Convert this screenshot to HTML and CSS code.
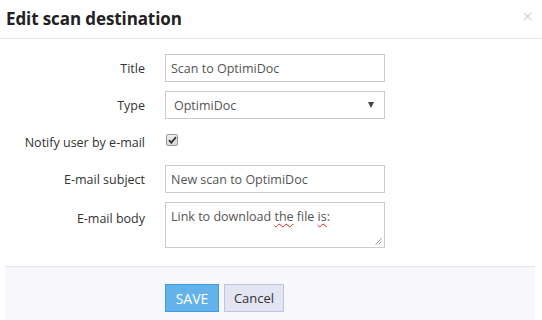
FILE: index.html
```html
<!DOCTYPE html>
<html>
<head>
<meta charset="utf-8">
<link rel="stylesheet" href="styles.css">
</head>
<body>
<div class="modal">
  <div class="modal-header">
    <h1 class="modal-title">Edit scan destination</h1>
    <span class="close">&times;</span>
  </div>
  <div class="modal-body">
    <div class="row">
      <label class="lbl">Title</label>
      <div class="field input">Scan to OptimiDoc</div>
    </div>
    <div class="row">
      <label class="lbl">Type</label>
      <div class="field select"><span>OptimiDoc</span><span class="caret"></span></div>
    </div>
    <div class="row row-check">
      <label class="lbl">Notify user by e-mail</label>
      <span class="check"><svg width="9" height="8" viewBox="0 0 9 8"><path d="M1 4.2 L3.3 6.6 L8 1.2" fill="none" stroke="#333" stroke-width="1.8"/></svg></span>
    </div>
    <div class="row">
      <label class="lbl">E-mail subject</label>
      <div class="field input">New scan to OptimiDoc</div>
    </div>
    <div class="row row-area">
      <label class="lbl">E-mail body</label>
      <div class="field area">Link to download <span class="sp">the</span> file <span class="sp">is</span>:<svg class="grip" width="7" height="7" viewBox="0 0 7 7"><path d="M6.5 0.5 L0.5 6.5 M6.5 3.5 L3.5 6.5" stroke="#888" stroke-width="0.9"/></svg></div>
    </div>
  </div>
  <div class="modal-footer">
    <button class="btn btn-save">SAVE</button>
    <button class="btn btn-cancel">Cancel</button>
  </div>
</div>
</body>
</html>
```

FILE: styles.css
```css
* { box-sizing: border-box; }
html, body { margin: 0; padding: 0; background: #fff; }
body {
  font-family: "Open Sans", "Noto Sans", sans-serif;
  font-size: 12.5px;
  color: #333;
  width: 542px;
  height: 320px;
  overflow: hidden;
}
.modal { width: 542px; }
.modal-header {
  height: 39px;
  border-bottom: 1px solid #e8e8e8;
  display: flex;
  align-items: center;
  justify-content: space-between;
  padding: 0 10px 2px 6px;
}
.modal-title {
  margin: 0;
  font-size: 17px;
  font-weight: 700;
  color: #222;
  letter-spacing: -0.1px;
}
.close {
  color: #c4c4c4;
  font-size: 19px;
  font-weight: 300;
  line-height: 1;
  margin-top: -4px;
  margin-right: -1px;
}
.modal-body {
  padding: 15px 0 18px;
  display: flex;
  flex-direction: column;
  gap: 9px;
}
.row {
  display: grid;
  grid-template-columns: 145px 220px;
  column-gap: 20px;
  align-items: center;
  min-height: 28px;
}
.row-area { align-items: start; }
.lbl {
  text-align: right;
  color: #333;
  white-space: nowrap;
}
.row-area .lbl { padding-top: 8px; }
.field {
  border: 1px solid #ccc;
  background: #fff;
  color: #555;
  height: 28px;
  padding: 0 5px;
  display: flex;
  align-items: center;
}
.select {
  justify-content: space-between;
  padding-left: 8px;
  padding-right: 10px;
}
.caret {
  width: 0; height: 0;
  border-left: 3.5px solid transparent;
  border-right: 3.5px solid transparent;
  border-top: 6px solid #444;
}
.check {
  width: 12px;
  height: 12px;
  margin-left: 1px;
  margin-top: -4px;
  border: 1px solid #999;
  border-radius: 2px;
  background: linear-gradient(#eee, #d8d8d8);
  display: flex;
  align-items: center;
  justify-content: center;
}
.area {
  height: 46px;
  padding-top: 5px;
  position: relative;
  display: block;
}
.sp {
  text-decoration: underline wavy #e02020;
  text-decoration-thickness: 1px;
  text-underline-offset: 2px;
}
.grip { position: absolute; right: 2px; bottom: 2px; }
.modal-footer {
  margin: 0 7px 0 5px;
  border-top: 1px solid #e4e4e8;
  background: #f7f7fc;
  height: 60px;
  padding: 17px 0 0 160px;
  display: flex;
  align-items: flex-start;
  gap: 5px;
}
.btn {
  font-family: inherit;
  height: 28px;
  margin: 0;
  font-size: 13px;
  cursor: pointer;
}
.btn-save {
  width: 54px;
  background: #64b2ea;
  border: 1px solid #3e9de3;
  color: #fff;
  font-size: 14px;
}
.btn-cancel {
  width: 60px;
  background: #e4e5f3;
  border: 1px solid #c2c2e2;
  color: #333;
}
```
